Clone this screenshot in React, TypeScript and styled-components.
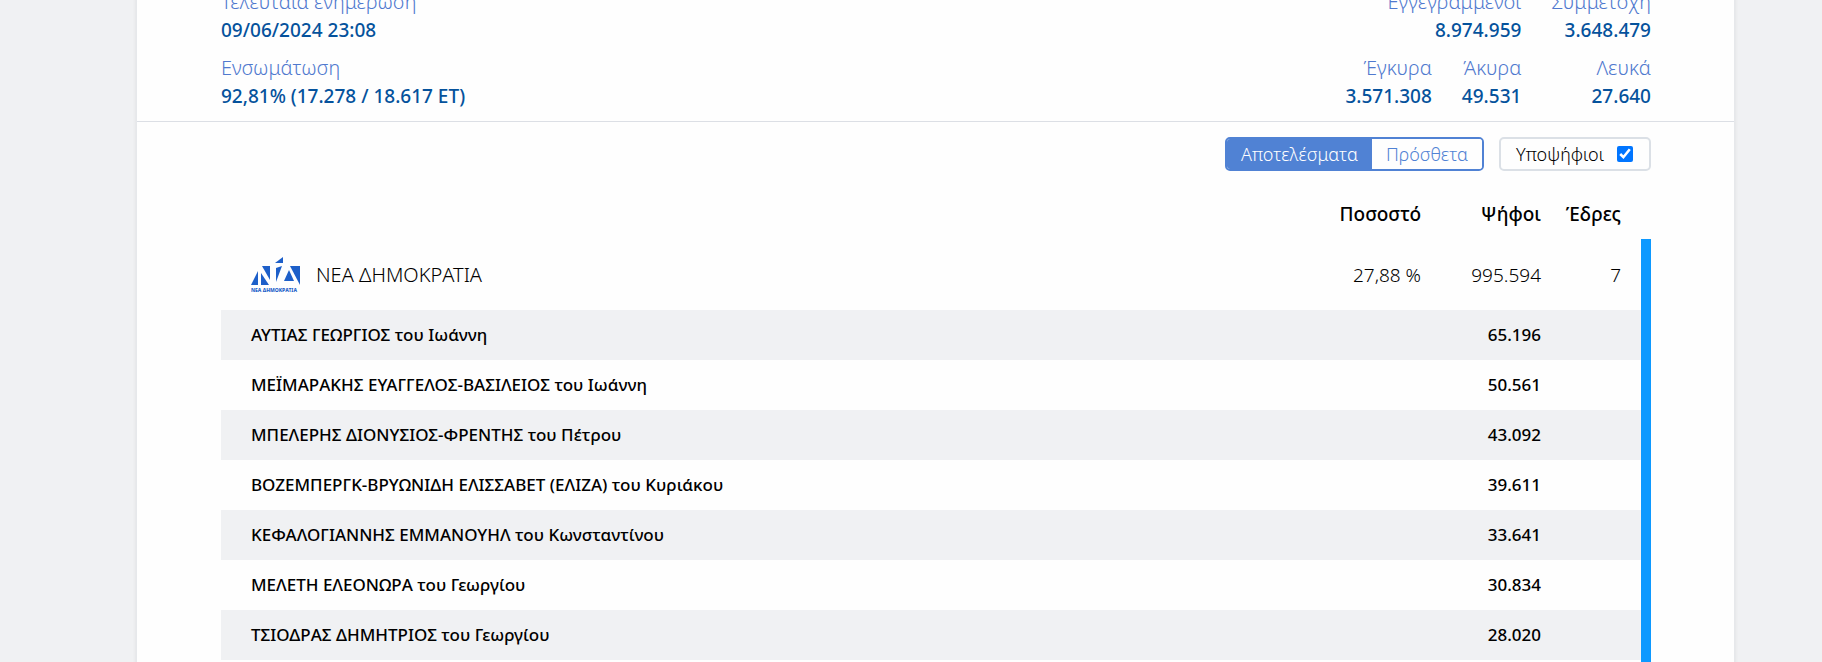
import React, { useState } from "react";
import styled, { createGlobalStyle } from "styled-components";

const GlobalStyle = createGlobalStyle`
  *, *::before, *::after { box-sizing: border-box; }
  body {
    margin: 0;
    background: #f0f1f3;
    color: #000;
    font-family: "Noto Sans", "Open Sans", sans-serif;
    font-size: 19px;
    line-height: 28px;
  }
`;

const Page = styled.div`
  height: 100vh;
  overflow: hidden;
  padding: 0 87px 0 136px;
`;

const Card = styled.main`
  min-height: 100%;
  background: #fefefe;
  border: solid #e6e8eb;
  border-width: 0 1px;
  box-shadow: 0 0 4px rgba(0, 0, 0, 0.08);
`;

const Summary = styled.section`
  display: flex;
  justify-content: space-between;
  margin-top: -12px;
  padding: 0 83px 11px 84px;
  border-bottom: 1px solid #dcdfe5;
`;

const StatColumn = styled.div`
  display: flex;
  flex-direction: column;
  gap: 10px;
`;

const StatGrid = styled.div`
  display: grid;
  grid-template-columns: repeat(3, auto);
  gap: 10px 30px;
  text-align: right;
`;

const StatBox = styled.dl<{ $span?: number }>`
  margin: 0;
  grid-column: span ${(p) => p.$span ?? 1};
`;

const StatLabel = styled.dt`
  color: #5079ce;
  font-size: 20px;
  font-weight: 300;
`;

const StatValue = styled.dd`
  margin: 0;
  color: #05529c;
  font-weight: 500;
`;

const Results = styled.section`
  padding: 15px 83px 0 84px;
`;

const Toolbar = styled.div`
  display: flex;
  justify-content: flex-end;
  gap: 15px;
  height: 34px;
  font-size: 18px;
  font-weight: 300;
`;

const Segments = styled.div`
  display: flex;
  width: 259px;
  border: 2px solid #5082d4;
  border-radius: 5px;
  overflow: hidden;
`;

const Segment = styled.button<{ $active: boolean }>`
  flex: auto;
  padding: 0;
  border: 0;
  background: ${(p) => (p.$active ? "#5082d4" : "#fefefe")};
  color: ${(p) => (p.$active ? "#fff" : "#5082d4")};
  font: inherit;
  cursor: pointer;
`;

const Toggle = styled.label`
  display: flex;
  align-items: center;
  justify-content: space-between;
  width: 152px;
  padding: 0 16px 0 15px;
  border: 2px solid #dbe0e6;
  border-radius: 5px;
`;

const Tick = styled.input`
  width: 16px;
  height: 16px;
  margin: 0;
  accent-color: #0075ff;
`;

const Table = styled.table`
  width: 100%;
  border-spacing: 0;
  table-layout: fixed;
`;

const Col = styled.col<{ $width?: number }>`
  width: ${(p) => (p.$width ? `${p.$width}px` : "auto")};
`;

const HeadCell = styled.th`
  height: 68px;
  padding: 29px 20px 0 0;
  text-align: right;
  vertical-align: top;
  font-weight: 500;

  &:last-child { border-right: 10px solid transparent; }
`;

const PartyRow = styled.tr`
  height: 71px;
  font-weight: 300;
`;

const CandidateRow = styled.tr`
  height: 50px;
  font-size: 17px;
  font-weight: 500;

  &:nth-child(even) { background: #f0f1f3; }
`;

const Cell = styled.td`
  padding: 0 20px 0 0;
  text-align: right;

  &:first-child {
    padding-left: 30px;
    text-align: left;
  }
  &:last-child { border-right: 10px solid #0d99ff; }
`;

const Party = styled.div`
  display: flex;
  align-items: center;
  gap: 15px;
  font-size: 20px;
`;

const Logo = () => (
  <svg width="50" height="36" viewBox="0 0 50 36" overflow="visible" role="img" aria-label="ΝΕΑ ΔΗΜΟΚΡΑΤΙΑ">
    <g fill="#1d5fc9">
      <path d="M0 28 7 14v14z" />
      <path d="M10 16v12h8z" />
      <path d="M11 9h8v14z" />
      <path d="M24 6 32 0v6z" />
      <path d="M25 11 31 9 25 25z" />
      <path d="M38 13 33 24h10z" />
      <path d="M39 9h10v19z" />
    </g>
    <text x="0" y="35" fontSize="5" fontWeight="800" fill="#1d5fc9">
      ΝΕΑ ΔΗΜΟΚΡΑΤΙΑ
    </text>
  </svg>
);

const candidates = [
  ["ΑΥΤΙΑΣ ΓΕΩΡΓΙΟΣ του Ιωάννη", "65.196"],
  ["ΜΕΪΜΑΡΑΚΗΣ ΕΥΑΓΓΕΛΟΣ-ΒΑΣΙΛΕΙΟΣ του Ιωάννη", "50.561"],
  ["ΜΠΕΛΕΡΗΣ ΔΙΟΝΥΣΙΟΣ-ΦΡΕΝΤΗΣ του Πέτρου", "43.092"],
  ["ΒΟΖΕΜΠΕΡΓΚ-ΒΡΥΩΝΙΔΗ ΕΛΙΣΣΑΒΕΤ (ΕΛΙΖΑ) του Κυριάκου", "39.611"],
  ["ΚΕΦΑΛΟΓΙΑΝΝΗΣ ΕΜΜΑΝΟΥΗΛ του Κωνσταντίνου", "33.641"],
  ["ΜΕΛΕΤΗ ΕΛΕΟΝΩΡΑ του Γεωργίου", "30.834"],
  ["ΤΣΙΟΔΡΑΣ ΔΗΜΗΤΡΙΟΣ του Γεωργίου", "28.020"],
  ["", ""],
];

const Stat = ({ label, value, span }: { label: string; value: string; span?: number }) => (
  <StatBox $span={span}>
    <StatLabel>{label}</StatLabel>
    <StatValue>{value}</StatValue>
  </StatBox>
);

export default function App() {
  const [view, setView] = useState("results");
  const [showCandidates, setShowCandidates] = useState(true);

  return (
    <Page>
      <GlobalStyle />
      <Card>
        <Summary>
          <StatColumn>
            <Stat label="Τελευταία ενημέρωση" value="09/06/2024 23:08" />
            <Stat label="Ενσωμάτωση" value="92,81% (17.278 / 18.617 ΕΤ)" />
          </StatColumn>
          <StatGrid>
            <Stat label="Εγγεγραμμένοι" value="8.974.959" span={2} />
            <Stat label="Συμμετοχή" value="3.648.479" />
            <Stat label="Έγκυρα" value="3.571.308" />
            <Stat label="Άκυρα" value="49.531" />
            <Stat label="Λευκά" value="27.640" />
          </StatGrid>
        </Summary>
        <Results>
          <Toolbar>
            <Segments>
              <Segment $active={view === "results"} onClick={() => setView("results")}>
                Αποτελέσματα
              </Segment>
              <Segment $active={view === "extra"} onClick={() => setView("extra")}>
                Πρόσθετα
              </Segment>
            </Segments>
            <Toggle>
              Υποψήφιοι
              <Tick
                type="checkbox"
                checked={showCandidates}
                onChange={(e) => setShowCandidates(e.target.checked)}
              />
            </Toggle>
          </Toolbar>
          <Table>
            <colgroup>
              <Col />
              <Col $width={140} />
              <Col $width={120} />
              <Col $width={90} />
            </colgroup>
            <thead>
              <tr>
                <HeadCell />
                <HeadCell scope="col">Ποσοστό</HeadCell>
                <HeadCell scope="col">Ψήφοι</HeadCell>
                <HeadCell scope="col">Έδρες</HeadCell>
              </tr>
            </thead>
            <tbody>
              <PartyRow>
                <Cell>
                  <Party>
                    <Logo />
                    ΝΕΑ ΔΗΜΟΚΡΑΤΙΑ
                  </Party>
                </Cell>
                <Cell>27,88 %</Cell>
                <Cell>995.594</Cell>
                <Cell>7</Cell>
              </PartyRow>
              {showCandidates &&
                candidates.map(([name, votes]) => (
                  <CandidateRow key={name}>
                    <Cell>{name}</Cell>
                    <Cell />
                    <Cell>{votes}</Cell>
                    <Cell />
                  </CandidateRow>
                ))}
            </tbody>
          </Table>
        </Results>
      </Card>
    </Page>
  );
}
